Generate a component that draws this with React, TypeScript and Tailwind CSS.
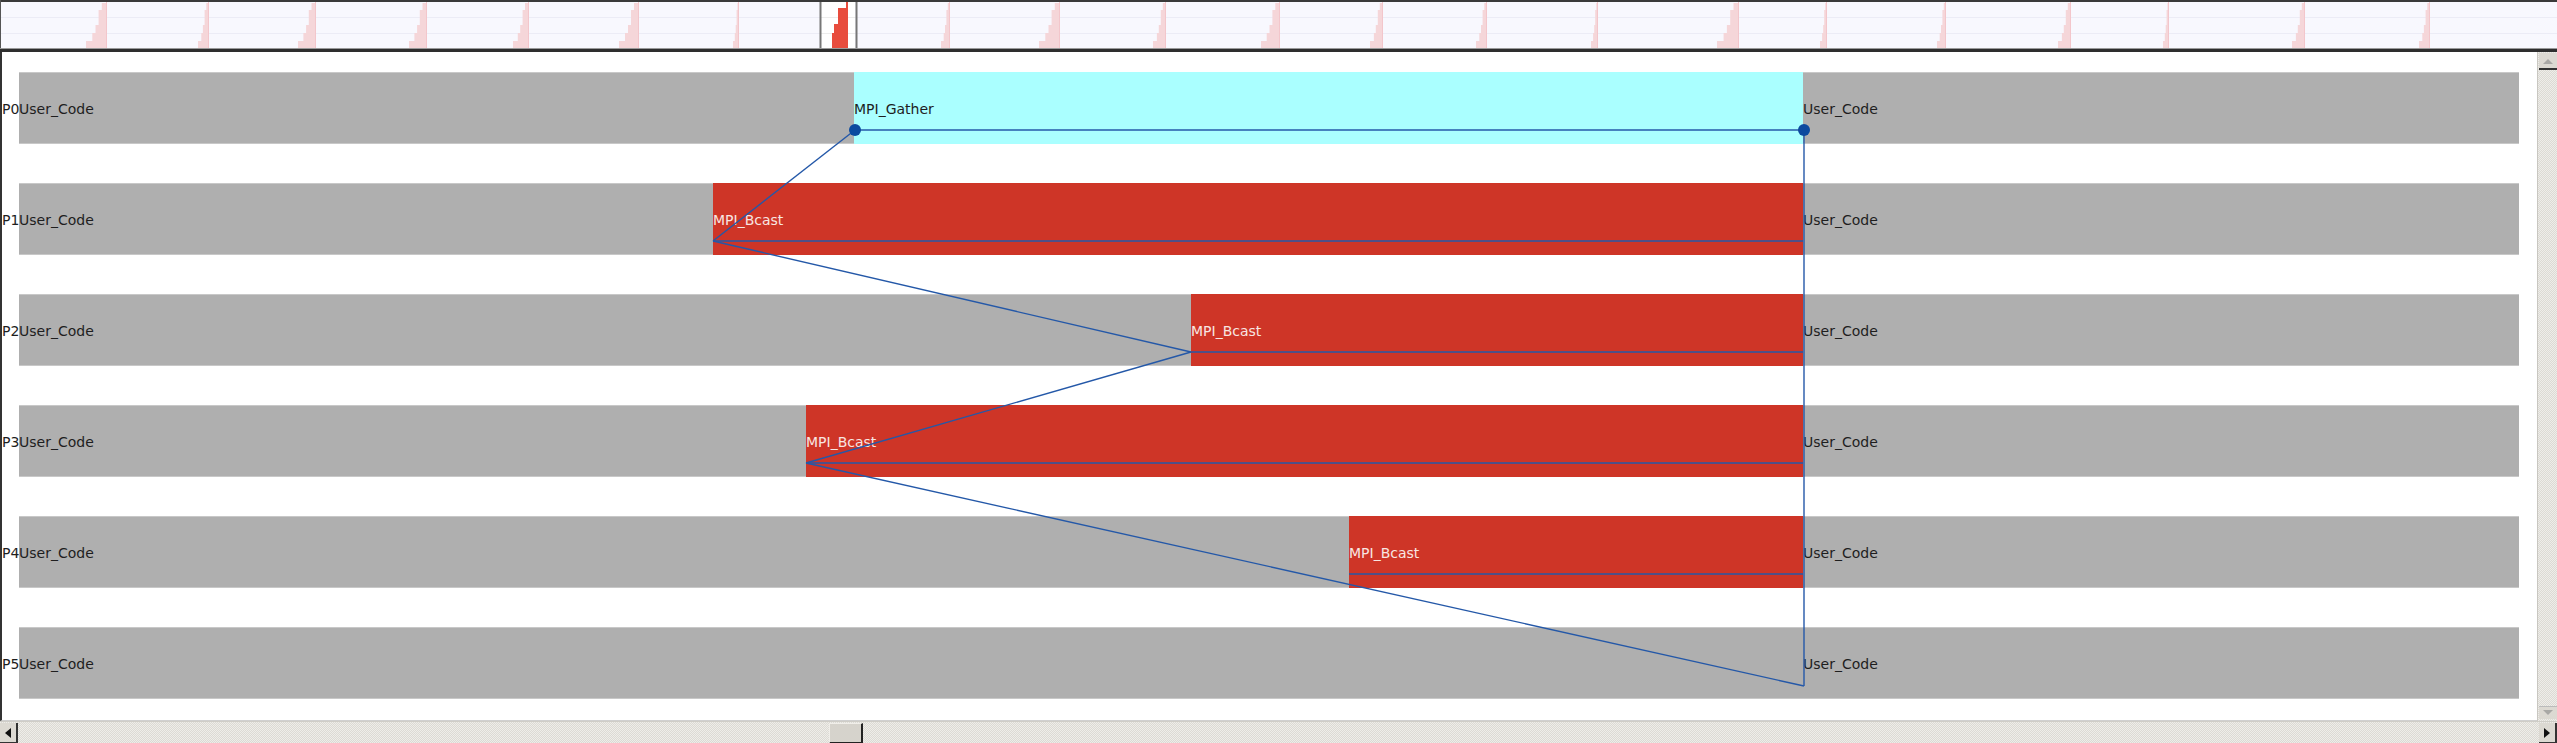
import React from "react";

type Seg = { w: number; kind: "gray" | "cyan" | "red"; label: string };
type Row = { name: string; segs: Seg[] };

const rows: Row[] = [
  { name: "P0", segs: [ { w: 835, kind: "gray", label: "User_Code" }, { w: 949, kind: "cyan", label: "MPI_Gather" }, { w: 716, kind: "gray", label: "User_Code" } ] },
  { name: "P1", segs: [ { w: 694, kind: "gray", label: "User_Code" }, { w: 1090, kind: "red", label: "MPI_Bcast" }, { w: 716, kind: "gray", label: "User_Code" } ] },
  { name: "P2", segs: [ { w: 1172, kind: "gray", label: "User_Code" }, { w: 612, kind: "red", label: "MPI_Bcast" }, { w: 716, kind: "gray", label: "User_Code" } ] },
  { name: "P3", segs: [ { w: 787, kind: "gray", label: "User_Code" }, { w: 997, kind: "red", label: "MPI_Bcast" }, { w: 716, kind: "gray", label: "User_Code" } ] },
  { name: "P4", segs: [ { w: 1330, kind: "gray", label: "User_Code" }, { w: 454, kind: "red", label: "MPI_Bcast" }, { w: 716, kind: "gray", label: "User_Code" } ] },
  { name: "P5", segs: [ { w: 1784, kind: "gray", label: "User_Code" }, { w: 716, kind: "gray", label: "User_Code" } ] },
];

const spikes: [number, number][] = [
  [86, 107], [198, 209], [298, 316], [409, 427], [513, 529], [619, 639], [733, 739],
  [941, 950], [1039, 1060], [1153, 1166], [1261, 1280], [1370, 1383], [1476, 1487],
  [1591, 1598], [1717, 1739], [1820, 1827], [1937, 1946], [2058, 2071], [2163, 2169],
  [2292, 2305], [2419, 2430],
];

function spikePoints(L: number, R: number) {
  const w = R - L;
  const p = (f: number) => (L + f * w).toFixed(1);
  return [
    `${L},49`, `${L},41`, `${p(0.3)},41`, `${p(0.3)},33`, `${p(0.45)},33`, `${p(0.45)},25`,
    `${p(0.6)},25`, `${p(0.6)},10`, `${p(0.75)},10`, `${p(0.75)},3`, `${R},3`, `${R},49`,
  ].join(" ");
}

function Overview() {
  return (
    <svg width={2557} height={52} className="block shrink-0">
      <rect x={0} y={0} width={2557} height={52} fill="#f8f8fe" />
      <line x1={0} y1={17.5} x2={2557} y2={17.5} stroke="#ececf6" strokeWidth={1} />
      <line x1={0} y1={33.5} x2={2557} y2={33.5} stroke="#ececf6" strokeWidth={1} />
      {spikes.map(([L, R], i) => (
        <g key={i}>
          <polygon points={spikePoints(L, R)} fill="#f5d6d9" />
          <line x1={R - 0.5} y1={2} x2={R - 0.5} y2={49} stroke="#f3c6cb" strokeWidth={1} />
        </g>
      ))}
      {/* selection window */}
      <rect x={821} y={2} width={34} height={47} fill="#ffffff" />
      <line x1={821} y1={17.5} x2={855} y2={17.5} stroke="#ececec" strokeWidth={1} />
      <line x1={821} y1={33.5} x2={855} y2={33.5} stroke="#ececec" strokeWidth={1} />
      <polygon points="832,49 832,33 834,33 834,24 838,24 838,8 846,8 846,2 848,2 848,49" fill="#e84c3d" />
      <line x1={820.5} y1={2} x2={820.5} y2={49} stroke="#777" strokeWidth={2} />
      <line x1={856.5} y1={2} x2={856.5} y2={49} stroke="#777" strokeWidth={2} />
      <rect x={0} y={0} width={2557} height={2} fill="#3a3a3a" />
      <rect x={0} y={0} width={1} height={52} fill="#555" />
      <rect x={0} y={48} width={2557} height={1} fill="#9a9a9a" />
      <rect x={0} y={49} width={2557} height={3} fill="#2e2e2e" />
    </svg>
  );
}

function Bar({ seg }: { seg: Seg }) {
  const base = "h-full flex items-center whitespace-nowrap overflow-visible shrink-0 text-[14px] leading-none";
  if (seg.kind === "gray")
    return (
      <div className={`${base} bg-[#afafaf] border-t border-b border-[#c8c8c8] text-[#1e1e1e]`} style={{ width: seg.w }}>
        <span className="pt-[1px]">{seg.label}</span>
      </div>
    );
  if (seg.kind === "cyan")
    return (
      <div className={`${base} bg-[#aaffff] text-[#1e1e1e]`} style={{ width: seg.w }}>
        <span className="pt-[1px]">{seg.label}</span>
      </div>
    );
  return (
    <div className={`${base} bg-[#ce3527] text-[#f8e6e2]`} style={{ width: seg.w }}>
      <span className="pt-[1px]">{seg.label}</span>
    </div>
  );
}

function Canvas() {
  return (
    <div className="flex-1 h-full bg-white border-l-2 border-[#333] border-b border-b-[#d0d0d0] flex flex-col pt-[20px] gap-[39px] overflow-hidden">
      {rows.map((r) => (
        <div key={r.name} className="flex h-[72px] shrink-0">
          <div className="w-[17px] shrink-0 flex items-center text-[14px] leading-none text-[#1e1e1e] whitespace-nowrap overflow-visible">
            <span className="pt-[1px]">{r.name}</span>
          </div>
          {r.segs.map((s, i) => (
            <Bar key={i} seg={s} />
          ))}
        </div>
      ))}
    </div>
  );
}

const pattern =
  "bg-[repeating-conic-gradient(#dcdad4_0%_25%,#eeede9_0%_50%)] bg-[length:2px_2px]";

function VScroll() {
  return (
    <div className={`w-[20px] h-full shrink-0 flex flex-col border-l border-[#c9c7c1] ${pattern}`}>
      <div className="ml-[1px] mt-[1px] h-[17px] w-[18px] bg-[#dcd9d2] border-b-2 border-[#333] flex items-center justify-center">
        <svg width="10" height="6"><polygon points="0,6 5,1 10,6" fill="#a9a8a5" /></svg>
      </div>
      <div className="flex-1" />
      <div className="ml-[1px] mb-[2px] h-[13px] w-[18px] bg-[#dcd9d2] border-t border-[#bbb] flex items-center justify-center">
        <svg width="10" height="6"><polygon points="0,0 10,0 5,5" fill="#a9a8a5" /></svg>
      </div>
    </div>
  );
}

function HScroll() {
  return (
    <div className={`h-[22px] w-full shrink-0 flex border-t border-[#cfcdc7] ${pattern}`}>
      <div className="mt-[1px] w-[18px] h-[20px] bg-[#dcd9d2] border-r-2 border-b border-[#333] flex items-center justify-center">
        <svg width="6" height="10"><polygon points="6,0 6,10 0,5" fill="#111" /></svg>
      </div>
      <div className="w-[811px] shrink-0" />
      <div className="mt-[1px] w-[34px] h-[21px] bg-[#d6d3cc] border-t border-l border-[#f0eee9] border-r-2 border-b-2 border-r-[#222] border-b-[#222] shrink-0" />
      <div className="flex-1" />
      <div className="mt-[1px] w-[18px] h-[20px] bg-[#dcd9d2] border-r-2 border-b border-[#333] flex items-center justify-center">
        <svg width="6" height="10"><polygon points="0,0 6,5 0,10" fill="#111" /></svg>
      </div>
    </div>
  );
}

function Arrows() {
  const c = "#2458a8";
  const lines: [number, number, number, number][] = [
    [855, 130, 1804, 130],
    [713, 241, 855, 130],
    [713, 241, 1803, 241],
    [713, 241, 1191, 352],
    [1191, 352, 1803, 352],
    [1191, 352, 806, 463],
    [806, 463, 1803, 463],
    [806, 463, 1804, 686],
    [1349, 574, 1803, 574],
    [1804, 130, 1804, 686],
  ];
  return (
    <svg width={2557} height={743} className="absolute top-0 left-0 pointer-events-none">
      {lines.map(([a, b, c2, d], i) => (
        <line key={i} x1={a} y1={b} x2={c2} y2={d} stroke={c} strokeWidth={1.4} />
      ))}
      <circle cx={855} cy={130} r={6} fill="#0b4a9f" />
      <circle cx={1804} cy={130} r={6} fill="#0b4a9f" />
    </svg>
  );
}

export default function App() {
  return (
    <div className="relative w-[2557px] h-[743px] overflow-hidden flex flex-col bg-white font-['DejaVu_Sans',sans-serif]">
      <Overview />
      <div className="flex h-[669px] shrink-0">
        <Canvas />
        <VScroll />
      </div>
      <HScroll />
      <Arrows />
    </div>
  );
}
